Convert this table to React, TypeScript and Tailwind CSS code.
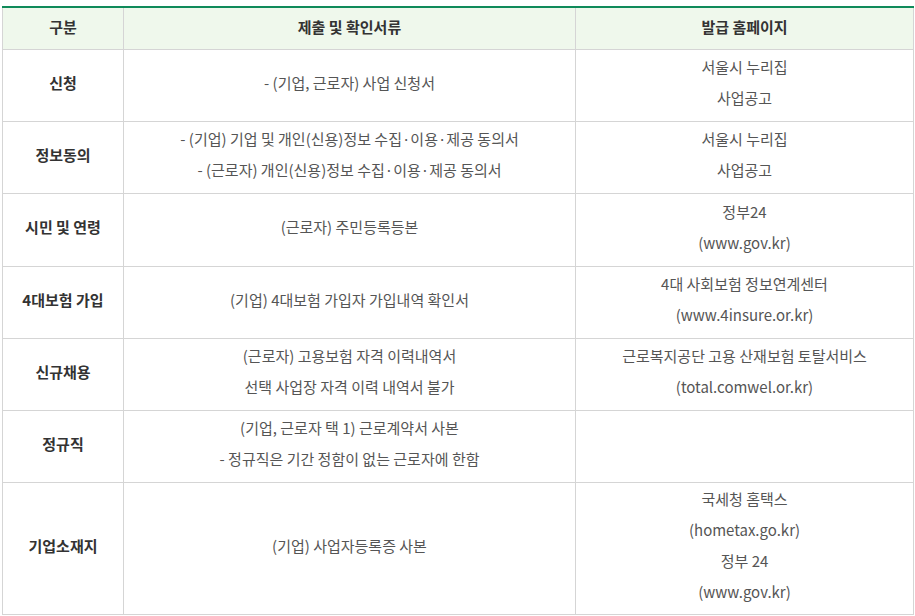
const rows: { head: string; docs: string[]; sites: string[]; h: string }[] = [
  { head: '신청', docs: ['- (기업, 근로자) 사업 신청서'], sites: ['서울시 누리집', '사업공고'], h: 'h-[72px]' },
  {
    head: '정보동의',
    docs: ['- (기업) 기업 및 개인(신용)정보 수집·이용·제공 동의서', '- (근로자) 개인(신용)정보 수집·이용·제공 동의서'],
    sites: ['서울시 누리집', '사업공고'],
    h: 'h-[72px]',
  },
  { head: '시민 및 연령', docs: ['(근로자) 주민등록등본'], sites: ['정부24', '(www.gov.kr)'], h: 'h-[73px]' },
  { head: '4대보험 가입', docs: ['(기업) 4대보험 가입자 가입내역 확인서'], sites: ['4대 사회보험 정보연계센터', '(www.4insure.or.kr)'], h: 'h-[72px]' },
  {
    head: '신규채용',
    docs: ['(근로자) 고용보험 자격 이력내역서', '선택 사업장 자격 이력 내역서 불가'],
    sites: ['근로복지공단 고용 산재보험 토탈서비스', '(total.comwel.or.kr)'],
    h: 'h-[72px]',
  },
  {
    head: '정규직',
    docs: ['(기업, 근로자 택 1) 근로계약서 사본', '- 정규직은 기간 정함이 없는 근로자에 한함'],
    sites: [],
    h: 'h-[72px]',
  },
  {
    head: '기업소재지',
    docs: ['(기업) 사업자등록증 사본'],
    sites: ['국세청 홈택스', '(hometax.go.kr)', '정부 24', '(www.gov.kr)'],
    h: 'h-[132px]',
  },
];

export default function App() {
  return (
    <div className="bg-white w-[915px] h-[616px] pt-[6px] pl-[2px]" style={{ fontFamily: '"Malgun Gothic", "Noto Sans CJK KR", sans-serif' }}>
      <table className="w-[912px] border-collapse table-fixed border-t-2 border-t-[#0f8a5a] text-[15px] leading-[31px] text-[#555]">
        <colgroup>
          <col className="w-[121px]" />
          <col className="w-[452px]" />
          <col />
        </colgroup>
        <thead>
          <tr className="h-[42px] bg-[#eff8ec]">
            <th className="border border-[#d5d5d5] border-t-0 font-bold text-[#333] pb-[4px]">구분</th>
            <th className="border border-[#d5d5d5] border-t-0 font-bold text-[#333] pb-[4px]">제출 및 확인서류</th>
            <th className="border border-[#d5d5d5] border-t-0 font-bold text-[#333] pb-[4px]">발급 홈페이지</th>
          </tr>
        </thead>
        <tbody>
          {rows.map((r) => (
            <tr key={r.head} className={r.h}>
              <td className="border border-[#d5d5d5] text-center font-bold text-[#333] pt-0 pb-[6px]">{r.head}</td>
              <td className="border border-[#d5d5d5] text-center pt-0 pb-[6px]">
                {r.docs.map((d) => (
                  <div key={d}>{d}</div>
                ))}
              </td>
              <td className="border border-[#d5d5d5] text-center pt-0 pb-[6px]">
                {r.sites.map((s, i) => (
                  <div key={i}>{s}</div>
                ))}
              </td>
            </tr>
          ))}
        </tbody>
      </table>
    </div>
  );
}
